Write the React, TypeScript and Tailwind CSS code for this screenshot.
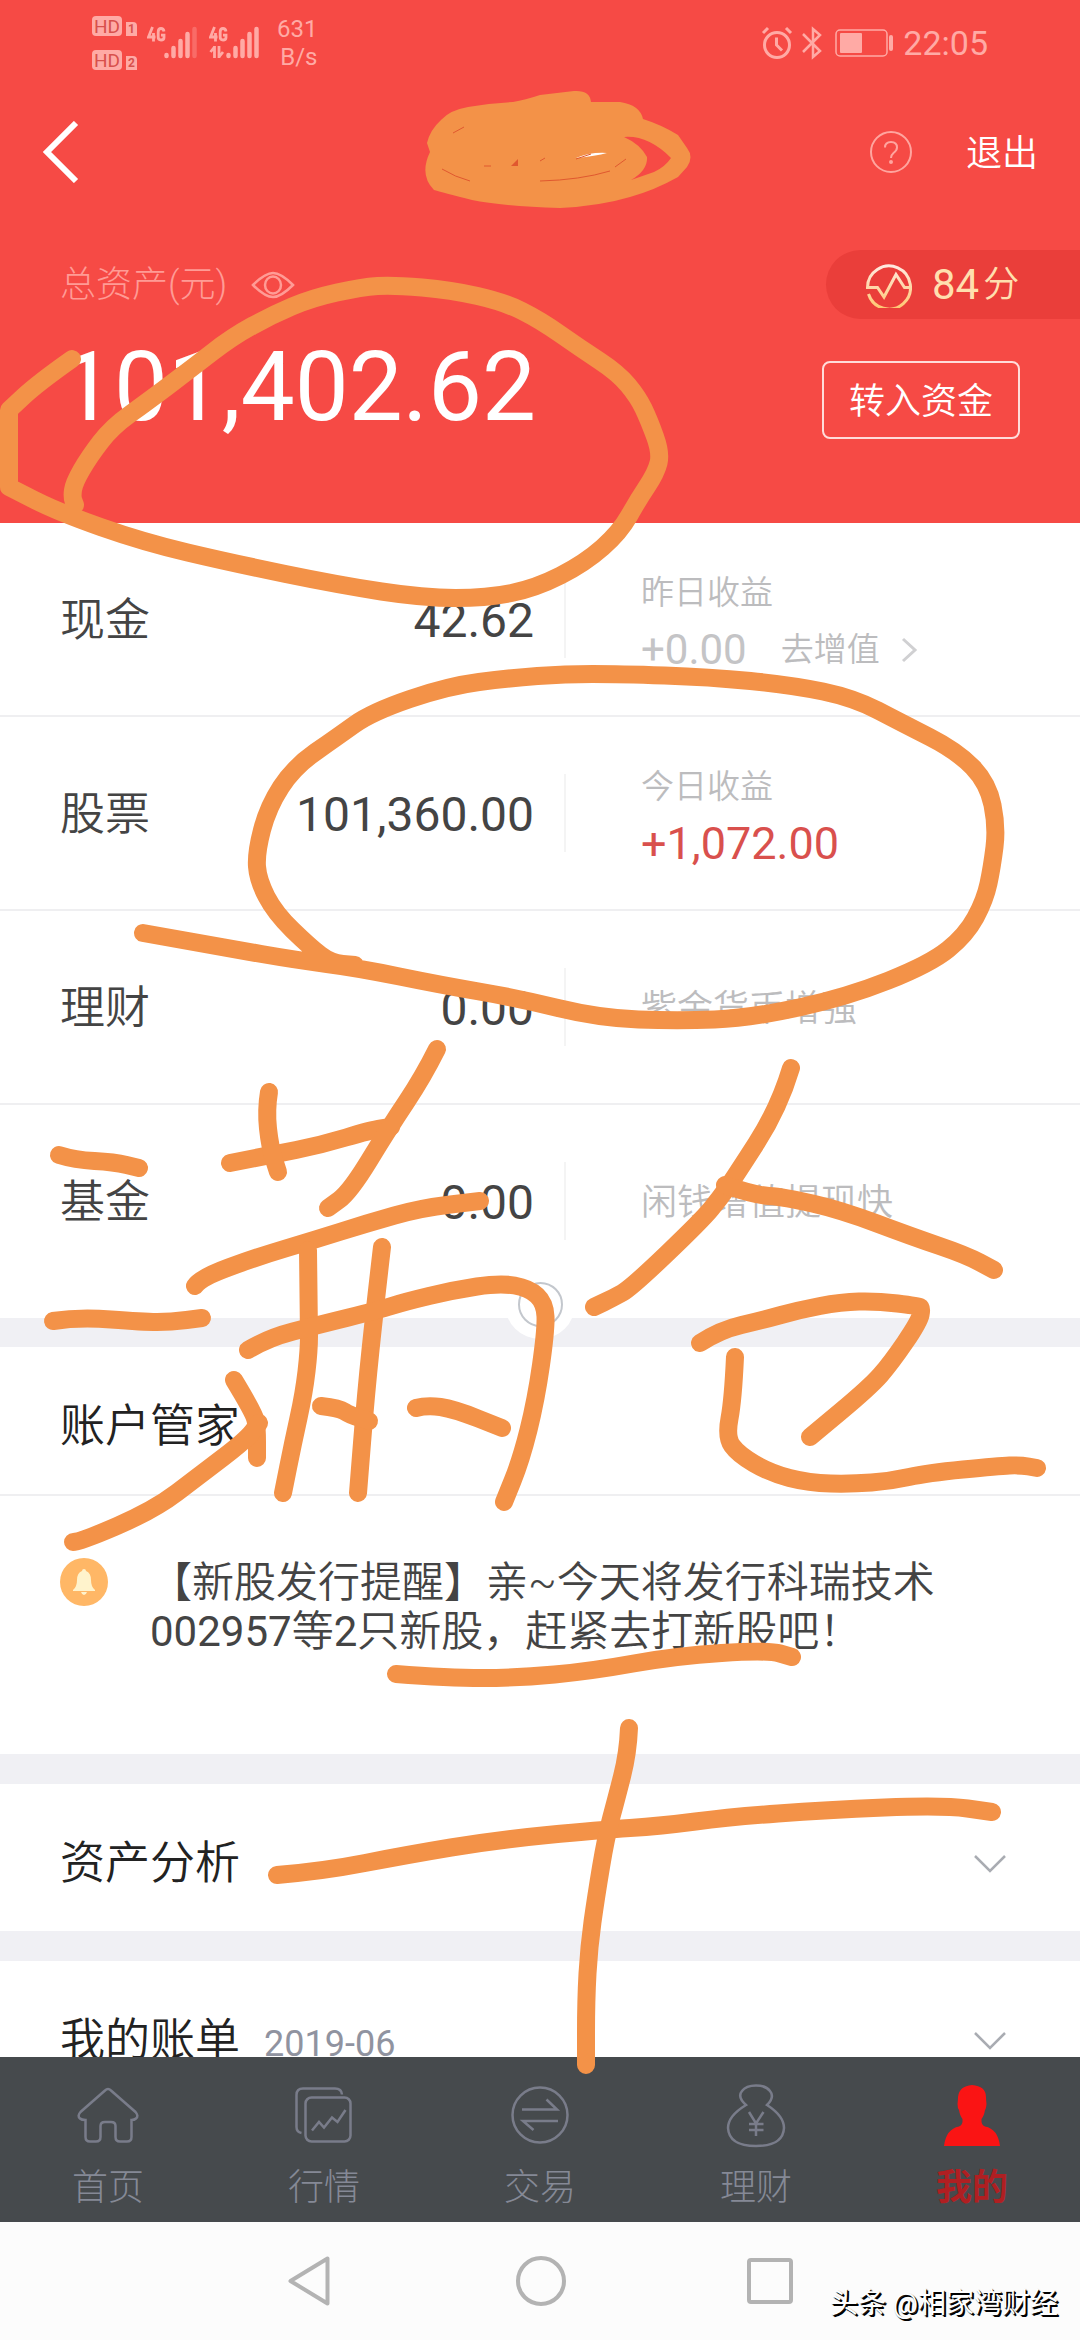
import { useState } from 'react';
import type { ReactNode } from 'react';

type Point = [number, number];

type Holding = {
  name: string;
  amount: string;
  profitLabel?: string;
  profit?: string;
  up?: boolean;
  link?: string;
  hint?: string;
};

const holdings: Holding[] = [
  { name: '现金', amount: '42.62', profitLabel: '昨日收益', profit: '+0.00', link: '去增值' },
  { name: '股票', amount: '101,360.00', profitLabel: '今日收益', profit: '+1,072.00', up: true },
  { name: '理财', amount: '0.00', hint: '紫金货币增强' },
  { name: '基金', amount: '0.00', hint: '闲钱增值提现快' },
];

// marker strokes, in a 1080 x 2340 space
const strokes: Point[][] = [
  // loop round the total
  [[72, 359], [38, 383], [9, 410], [9, 410], [9, 447], [9, 487], [9, 487], [58, 512], [143, 542], [232, 563], [339, 585], [424, 598], [487, 598], [536, 588], [585, 563], [620, 532], [638, 500], [656, 473], [661, 453], [649, 420], [638, 397], [618, 373], [580, 348], [540, 320], [504, 302], [451, 290], [393, 285], [362, 287], [312, 298], [272, 315], [232, 337], [192, 368], [147, 402], [112, 427], [89, 457], [74, 483], [72, 497], [75, 505]],
  // loop round the stock row
  [[143, 933], [227, 948], [296, 960], [358, 968], [441, 985], [517, 998], [599, 1018], [678, 1021], [751, 1018], [847, 997], [930, 964], [966, 935], [985, 900], [992, 867], [997, 827], [988, 783], [957, 751], [902, 723], [854, 698], [792, 685], [709, 677], [620, 674], [565, 674], [510, 678], [448, 686], [372, 712], [337, 737], [294, 767], [268, 807], [256, 853], [258, 880], [275, 913], [310, 947], [331, 963], [355, 965]],
  // first character
  [[59, 1155], [75, 1160], [114, 1162], [139, 1168]],
  [[53, 1321], [79, 1317], [143, 1322], [171, 1322], [202, 1318]],
  [[234, 1380], [254, 1413], [257, 1427], [257, 1458]],
  [[73, 1542], [80, 1542], [154, 1510], [200, 1475], [246, 1440], [259, 1423]],
  [[230, 1163], [271, 1155], [321, 1145], [371, 1130], [391, 1127]],
  [[269, 1092], [266, 1110], [270, 1147], [278, 1172]],
  [[437, 1049], [423, 1077], [389, 1128], [350, 1192], [328, 1208]],
  [[195, 1286], [200, 1278], [257, 1257], [314, 1240], [368, 1223], [421, 1208], [480, 1201]],
  [[308, 1250], [309, 1323], [309, 1350], [304, 1393], [293, 1443], [283, 1493]],
  [[382, 1247], [375, 1307], [366, 1393], [358, 1493]],
  [[248, 1350], [268, 1338], [318, 1325], [379, 1310], [404, 1302], [454, 1290], [500, 1283], [529, 1288], [545, 1303], [546, 1330], [536, 1400], [521, 1460], [504, 1502]],
  [[321, 1406], [339, 1408], [350, 1415], [369, 1421]],
  [[416, 1408], [427, 1405], [454, 1409], [502, 1428]],
  // second character
  [[791, 1068], [779, 1108], [734, 1178], [720, 1198], [702, 1220], [631, 1288], [613, 1298], [594, 1307]],
  [[725, 1185], [754, 1195], [784, 1197], [841, 1210], [913, 1237], [966, 1255], [994, 1270]],
  [[700, 1343], [720, 1330], [763, 1320], [799, 1310], [841, 1302], [877, 1301], [918, 1306], [922, 1308], [919, 1322], [891, 1363], [870, 1387], [810, 1437]],
  [[735, 1357], [733, 1400], [726, 1437], [738, 1454], [770, 1473], [809, 1483], [852, 1484], [891, 1481], [927, 1473], [999, 1466], [1020, 1465], [1037, 1468]],
  // third character
  [[396, 1674], [448, 1678], [517, 1678], [592, 1671], [675, 1656], [768, 1650], [792, 1657]],
  [[277, 1875], [324, 1871], [406, 1855], [496, 1840], [599, 1830], [661, 1826], [730, 1817], [826, 1810], [943, 1805], [992, 1812]],
  [[629, 1728], [628, 1753], [616, 1800], [606, 1837], [596, 1897], [589, 1947], [586, 2000], [586, 2065]],
];

// quadratic curve through the midpoints
const toPath = (pts: Point[]) => {
  let d = `M${pts[0][0]} ${pts[0][1]}`;
  for (let i = 1; i < pts.length - 1; i++) {
    const mx = (pts[i][0] + pts[i + 1][0]) / 2;
    const my = (pts[i][1] + pts[i + 1][1]) / 2;
    d += ` Q${pts[i][0]} ${pts[i][1]} ${mx} ${my}`;
  }
  const last = pts[pts.length - 1];
  return `${d} L${last[0]} ${last[1]}`;
};

const Marker = () => (
  <svg
    className="pointer-events-none absolute inset-x-0 top-0 z-20 w-full"
    viewBox="0 0 1080 2340"
    fill="none"
    aria-hidden="true"
  >
    <path
      fill="#f39248"
      fillRule="evenodd"
      d="M427 143 Q430 130 441 120 Q450 110 468 107 Q490 103 513 102 Q525 100 540 95 L574 91 Q590 90 591 102 L620 102 Q640 105 643 119 Q662 125 678 135 L687 148 Q694 157 687 167 L678 177 Q655 190 630 197 Q600 206 560 208 Q500 206 472 200 Q444 193 434 190 Q419 175 430 152 Z M624 137 Q648 135 671 158 Q665 167 654 172 L631 180 Q648 170 647 157 Q640 144 624 137 Z"
    />
    <path d="M576 158 Q590 152 607 153 Q596 156 576 158 Z" fill="#fff" />
    <path
      stroke="#e0582f"
      strokeWidth="1"
      d="M576 159 L591 154 M453 133 L464 127 M442 169 Q455 177 470 181 M484 166 h7 M540 161 l5 -3 M615 167 L626 159 M540 181 Q580 180 610 171"
    />
    <path d="M511 166 L518 159 V166 Z" fill="#e0582f" />
    <g stroke="#f39248" strokeWidth="18" strokeLinecap="round" strokeLinejoin="round">
      {strokes.map((pts, i) => (
        <path key={i} d={toPath(pts)} />
      ))}
    </g>
  </svg>
);

const HdBadge = ({ sim }: { sim: string }) => (
  <div className="flex items-end gap-1">
    <span className="flex h-5 w-[30px] items-center justify-center rounded-sm bg-[#ffaaa5] text-[19px] leading-none text-[#d8504c]">
      HD
    </span>
    <span className="flex h-[14px] w-[11px] items-center justify-center rounded-tr-sm bg-[#ffaaa5] text-[12px] leading-none font-bold text-[#d8504c]">
      {sim}
    </span>
  </div>
);

const Signal = ({ weak }: { weak?: boolean }) => (
  <svg width="52" height="34" viewBox="0 0 52 34" fill="none" aria-hidden="true">
    <g stroke="#ffaaa5" strokeWidth="2.8">
      <path d="M5.500 1 L1.500 11 H8.500 M6.500 7 V15.500" />
      <path d="M17 5.500 Q16.500 2.500 14 2.500 Q11.200 2.500 11.200 6 V11 Q11.200 14 14 14 Q17 14 17 11.500 V9.200 H14" />
    </g>
    {!weak && (
      <path
        d="M5.500 20 V32 M5.500 21 L1.500 26 M10 20 V32 M10 31 L14 26"
        stroke="#ffaaa5"
        strokeWidth="2.800"
      />
    )}
    <g stroke="#ffaaa5" strokeWidth="4.500" strokeLinecap="round">
      <path d="M19.500 29 V30 M26.500 22 V30 M33.500 15 V30 M40.500 8 V30" />
      <path d="M47.500 3 V30" opacity={weak ? 0.35 : 1} />
    </g>
  </svg>
);

const StatusBar = () => (
  <div className="flex h-[86px] items-center justify-between pr-[92px] pl-[92px] text-[#ffaaa5]">
    <div className="flex items-center gap-[10px]">
      <div className="flex flex-col gap-[14px]">
        <HdBadge sim="1" />
        <HdBadge sim="2" />
      </div>
      <Signal weak />
      <Signal />
      <div className="ml-[6px] text-right text-2xl leading-7">
        <div>631</div>
        <div>B/s</div>
      </div>
    </div>
    <div className="flex items-center gap-2">
      <svg width="32" height="34" viewBox="0 0 32 34" fill="none" stroke="#ffaaa5" strokeWidth="3" aria-hidden="true">
        <circle cx="16" cy="19" r="12.500" />
        <path d="M15.500 11.500 V19 L21 24.500" />
        <path d="M2 7 L7 2 M25 2 L30 7" />
      </svg>
      <svg width="22" height="34" viewBox="0 0 22 34" fill="none" stroke="#ffaaa5" strokeWidth="2.500" aria-hidden="true">
        <path d="M2 8 L19 25 L12 31 V3 L19 9 L2 26" />
      </svg>
      <svg className="ml-1" width="60" height="28" viewBox="0 0 60 28" aria-hidden="true">
        <rect x="1" y="1" width="51" height="26" rx="4" fill="none" stroke="#ffaaa5" strokeWidth="1.500" />
        <rect x="5" y="4" width="22" height="20" rx="1" fill="#ffaaa5" />
        <rect x="54" y="6" width="4" height="16" rx="2" fill="#ffaaa5" />
      </svg>
      <span className="text-[34px] leading-none">22:05</span>
    </div>
  </div>
);

const Header = () => (
  <header className="bg-[#f64a45] text-white">
    <StatusBar />
    <div className="flex h-[132px] items-center justify-between px-[42px]">
      <button type="button" aria-label="返回">
        <svg width="38" height="62" viewBox="0 0 38 62" fill="none" stroke="#fff" strokeWidth="6">
          <path d="M34 2 L5 31 L34 60" />
        </svg>
      </button>
      <div className="flex items-center gap-[54px]">
        <button
          type="button"
          aria-label="帮助"
          className="flex size-[42px] items-center justify-center rounded-full border-2 border-[#ffa59f]"
        >
          <svg width="16" height="24" viewBox="0 0 16 24" fill="none" stroke="#ffa59f" strokeWidth="2">
            <path d="M2 7.500 Q2 2 8 2 Q14 2 14 7.500 Q14 10.500 10.500 13 Q8 15 8 18" />
            <circle cx="8" cy="22" r="1" fill="#ffa59f" />
          </svg>
        </button>
        <button type="button" className="pt-1 text-4xl font-[350]">退出</button>
      </div>
    </div>
    <div className="mt-8 flex items-center justify-between pl-[60px]">
      <div className="flex items-center gap-6 text-[#ff9b95]">
        <span className="text-4xl font-light">总资产(元)</span>
        <button type="button" aria-label="隐藏金额">
          <svg width="44" height="28" viewBox="0 0 44 28" fill="none" stroke="#ff9b95" strokeWidth="2.500">
            <path d="M2 14 Q14 2 22 2 Q30 2 42 14 Q30 26 22 26 Q14 26 2 14 Z" />
            <ellipse cx="22" cy="14" rx="8" ry="8.500" />
          </svg>
        </button>
      </div>
      <button
        type="button"
        className="flex h-[69px] w-[254px] items-center rounded-l-full bg-[#ea3e3a] pl-10 text-[#ffdfae]"
      >
        <svg width="46" height="46" viewBox="0 0 46 46" fill="none" strokeWidth="3">
          <defs>
            <linearGradient id="gold" x1="0" y1="0" x2="0" y2="1">
              <stop offset="0" stopColor="#ffe9df" />
              <stop offset="1" stopColor="#ffc670" />
            </linearGradient>
          </defs>
          <path
            stroke="url(#gold)"
            d="M2.500 32 A21.500 21.500 0 1 0 1.500 25.500 H11.500 L18 35 L30 12.500 L38.500 25.500 H44"
          />
        </svg>
        <span className="ml-5 text-[42px] leading-none">84</span>
        <span className="ml-1 text-4xl leading-none font-[350]">分</span>
      </button>
    </div>
    <div className="flex items-start justify-between px-[60px] pt-5 pb-[84px]">
      <div className="text-8xl">101,402.62</div>
      <button
        type="button"
        className="mt-[22px] h-[78px] w-[198px] rounded-lg border-2 border-[#ffdcda] pt-1 text-4xl font-[350]"
      >
        转入资金
      </button>
    </div>
  </header>
);

const HoldingRow = ({ item }: { item: Holding }) => (
  <div className="grid min-h-[194px] grid-cols-[566fr_514fr] items-center border-b-2 border-[#efeff1] last:border-transparent">
    <div className="flex h-[78px] items-center justify-between border-r-2 border-[#f4f4f4] pt-1 pr-[30px] pl-[60px] text-[#444]">
      <span className="text-[45px]">{item.name}</span>
      <span className="text-5xl font-normal">{item.amount}</span>
    </div>
    <div className="pt-1 pl-[75px] text-[#bcbcbe]">
      {item.profitLabel && <div className="text-[33px] leading-[57px]">{item.profitLabel}</div>}
      {item.profit && (
        <div className="flex items-center leading-[57px]">
          <span className={item.up ? 'text-[45px] font-normal text-[#d9504d]' : 'text-[42px] font-normal text-[#c4c4c6]'}>
            {item.profit}
          </span>
          {item.link && (
            <a href="#" className="ml-[34px] flex items-center gap-5 text-[33px]">
              {item.link}
              <svg width="18" height="26" viewBox="0 0 18 26" fill="none" stroke="#d0d0d2" strokeWidth="3">
                <path d="M3 2 L15 13 L3 24" />
              </svg>
            </a>
          )}
        </div>
      )}
      {item.hint && <div className="text-4xl">{item.hint}</div>}
    </div>
  </div>
);

const FoldRow = ({ title, extra }: { title: string; extra?: string }) => {
  const [open, setOpen] = useState(false);
  return (
    <button
      type="button"
      aria-expanded={open}
      onClick={() => setOpen(!open)}
      className="flex h-[147px] w-full items-center justify-between bg-white pt-3 pr-[73px] pl-[60px]"
    >
      <span className="flex items-baseline gap-6">
        <span className="text-[45px] font-[350] text-[#222]">{title}</span>
        {extra && <span className="text-4xl text-[#9093a0]">{extra}</span>}
      </span>
      <svg width="34" height="20" viewBox="0 0 34 20" fill="none" stroke="#a9acb2" strokeWidth="2.500">
        <path d="M2 2 L17 17 L32 2" />
      </svg>
    </button>
  );
};

const tabs: { label: string; icon: ReactNode; active?: boolean }[] = [
  {
    label: '首页',
    icon: (
      <path d="M29 6.500 Q32 3.500 35 6.500 L59.500 28 Q63 32 60 34.500 Q58.500 36 55.500 36 V53 Q55.500 57.500 51 57.500 H44 Q39.500 57.500 39.500 53 V42 Q39.500 38 35 38 H29 Q24.500 38 24.500 42 V53 Q24.500 57.500 20 57.500 H14 Q9.500 57.500 9.500 53 V36 Q5.500 36 4 34.500 Q1 32 4.500 28 Z" />
    ),
  },
  {
    label: '行情',
    icon: (
      <>
        <rect x="13.500" y="13.500" width="45" height="44" rx="6" />
        <path d="M9.500 49 Q4.500 48 4.500 43 V11 Q4.500 4.500 11 4.500 H43 Q49.500 4.500 50 10.500" />
        <path d="M20 46.500 L27 38 L32 43.500 L40 33.500 L45.500 38 L53.500 26" />
      </>
    ),
  },
  {
    label: '交易',
    icon: (
      <>
        <circle cx="32" cy="31" r="27.500" />
        <path d="M14 25.500 H49 L38.500 15.500 M50 37 H15 L25.500 46" />
      </>
    ),
  },
  {
    label: '理财',
    icon: (
      <>
        <path d="M22 21 Q13 13 18 7 Q22 1.500 32 1.500 Q42 1.500 46 7 Q51 13 43 21 Q60 32 60 44 Q59 62 32 62 Q5 62 4 44 Q4 32 22 21 Z" />
        <path d="M25 28 L32 39.500 L39.500 28 M25 40 H39.500 M25 46 H39.500 M32 39.500 V52" />
      </>
    ),
  },
  {
    label: '我的',
    active: true,
    icon: (
      <path
        fill="#fa1414"
        stroke="none"
        d="M32 1 Q46 2 46 13 Q46 16 46.500 20 Q46 25 45 26 Q44 32 41.500 35 Q41 41 45 42.500 Q58 45 60 62 H4 Q6 45 19 42.500 Q23 41 22.500 35 Q20 32 19 26 Q17.500 24 17.500 20 Q18 16 18 13 Q19 2 32 1 Z"
      />
    ),
  },
];

const TabBar = () => (
  <nav className="grid h-[165px] shrink-0 grid-cols-5 bg-[#464a4d]">
    {tabs.map((tab) => (
      <a
        key={tab.label}
        href="#"
        className={`flex flex-col items-center gap-5 pt-[27px] text-4xl ${tab.active ? 'font-bold text-[#b01f22]' : 'font-light text-[#858996]'}`}
      >
        <svg width="64" height="64" viewBox="0 0 64 64" fill="none" stroke="#797c8a" strokeWidth="2.500">
          {tab.icon}
        </svg>
        <span>{tab.label}</span>
      </a>
    ))}
  </nav>
);

const SystemNav = () => (
  <div className="relative flex h-[118px] shrink-0 items-center justify-center gap-[181px] bg-[#fcfcfc]">
    <button type="button" aria-label="返回键">
      <svg width="48" height="54" viewBox="0 0 48 54" fill="none" stroke="#b3b3b3" strokeWidth="4" strokeLinejoin="round">
        <path d="M3.500 27 L40.500 4.500 V49.500 Z" />
      </svg>
    </button>
    <button type="button" aria-label="主页键" className="size-[50px] rounded-full border-4 border-[#b3b3b3]" />
    <button type="button" aria-label="最近任务" className="size-[46px] rounded-sm border-4 border-[#b3b3b3]" />
    <span className="absolute right-[22px] bottom-4 text-[28px] leading-10 text-white [text-shadow:1px_1px_1px_#000,2px_2px_0_#000]">
      头条 @相家湾财经
    </span>
  </div>
);

export default function App() {
  return (
    <div className="relative flex h-screen flex-col overflow-hidden bg-[#f0f0f4] font-[Roboto,'Noto_Sans_CJK_SC',sans-serif]">
      <main className="min-h-0 flex-1 overflow-y-auto [scrollbar-width:none]">
        <Header />
        <section className="relative bg-white pb-[19px] font-[350]">
          <div>
            {holdings.map((item) => (
              <HoldingRow key={item.name} item={item} />
            ))}
          </div>
          <button
            type="button"
            aria-label="收起"
            className="absolute -bottom-[21px] left-1/2 flex size-[70px] -translate-x-1/2 items-center justify-center rounded-full bg-white"
          >
            <span className="size-[45px] rounded-full border-2 border-[#c3c7cd]" />
          </button>
        </section>
        <section className="mt-[29px] bg-white">
          <h2 className="flex h-[149px] items-center border-b-2 border-[#efeff1] pt-3 pl-[60px] text-[45px] font-[350] text-[#222]">
            账户管家
          </h2>
          <div className="flex items-start gap-[42px] px-[60px] pt-[62px] pb-[98px]">
            <svg className="shrink-0" width="48" height="48" viewBox="0 0 48 48" aria-hidden="true">
              <circle cx="24" cy="24" r="24" fill="#ffb766" />
              <path
                d="M24 11 Q26 11 26 13 Q31 15 31 22 Q31 29 35 32 V33 H13 V32 Q17 29 17 22 Q17 15 22 13 Q22 11 24 11 Z M21 34 H27 Q26 37 24 37 Q22 37 21 34 Z"
                fill="#fff3cc"
              />
            </svg>
            <p className="text-[42px] leading-[49px] font-[350] text-[#444]">
              【新股发行提醒】亲~今天将发行科瑞技术
              <br />
              <span className="font-normal">002957</span>等<span className="font-normal">2</span>只新股，赶紧去打新股吧！
            </p>
          </div>
        </section>
        <section className="mt-[30px]">
          <FoldRow title="资产分析" />
        </section>
        <section className="mt-[30px]">
          <FoldRow title="我的账单" extra="2019-06" />
        </section>
      </main>
      <TabBar />
      <SystemNav />
      <Marker />
    </div>
  );
}
